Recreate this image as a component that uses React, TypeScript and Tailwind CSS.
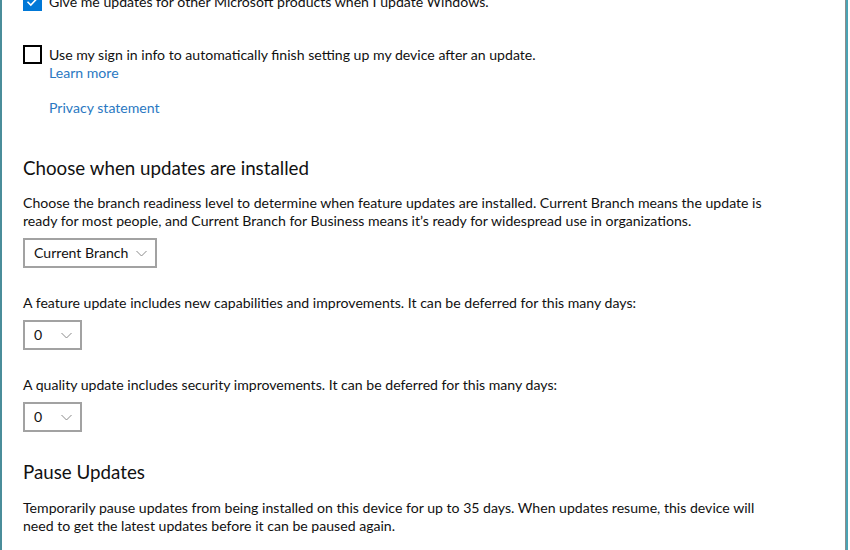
function Checkbox({ checked }: { checked?: boolean }) {
    if (checked) {
        return (
            <span className="flex h-[19px] w-[19px] shrink-0 items-center justify-center bg-[#0078d7]">
                <svg width="13" height="13" viewBox="0 0 13 13" fill="none">
                    <path d="M1.5 6.8 L4.8 10 L11.5 3" stroke="#fff" strokeWidth="1.6" />
                </svg>
            </span>
        );
    }
    return <span className="h-[19px] w-[19px] shrink-0 border-2 border-black bg-white" />;
}

function Chevron() {
    return (
        <svg width="11" height="7" viewBox="0 0 11 7" fill="none">
            <path d="M0.5 1 L5.5 6 L10.5 1" stroke="#8a8a8a" strokeWidth="1" />
        </svg>
    );
}

function Dropdown({ value, width }: { value: string; width: string }) {
    return (
        <div
            className={`flex h-[30px] ${width} items-center justify-between whitespace-nowrap border-2 border-[#a2a2a2] bg-white pl-[9px] pr-[8px] text-[14.1px] text-[#111]`}
        >
            <span>{value}</span>
            <Chevron />
        </div>
    );
}

export default function App() {
    return (
        <div
            className="flex h-[550px] w-[850px] overflow-hidden bg-white text-[14.1px] leading-[18px] text-[#111]"
            style={{ fontFamily: 'Lato, "Noto Sans", sans-serif' }}
        >
            {/* left window edge */}
            <div className="w-[2px] shrink-0 bg-[#4a8d9a]" />

            {/* Settings content */}
            <div className="flex flex-1 flex-col whitespace-nowrap pl-[21px]">
                <div className="-mt-[8px] flex h-[19px] items-center gap-[7px]">
                    <Checkbox checked />
                    <span>Give me updates for other Microsoft products when I update Windows.</span>
                </div>

                <div className="mt-[34px] flex h-[19px] items-center gap-[7px]">
                    <Checkbox />
                    <span>Use my sign in info to automatically finish setting up my device after an update.</span>
                </div>
                <a className="pl-[26px] text-[#2a78c2]">Learn more</a>

                <a className="mt-[17px] pl-[26px] text-[#2a78c2]">Privacy statement</a>

                <h2 className="mt-[37px] text-[18.75px] leading-[28px] text-[#111]">Choose when updates are installed</h2>
                <p className="mt-[12px]">
                    Choose the branch readiness level to determine when feature updates are installed. Current Branch means the update is
                    <br />
                    ready for most people, and Current Branch for Business means it’s ready for widespread use in organizations.
                </p>
                <div className="mt-[8px]">
                    <Dropdown value="Current Branch" width="w-[134px]" />
                </div>

                <p className="mt-[26px]">
                    A feature update includes new capabilities and improvements. It can be deferred for this many days:
                </p>
                <div className="mt-[8px]">
                    <Dropdown value="0" width="w-[59px]" />
                </div>

                <p className="mt-[26px]">
                    A quality update includes security improvements. It can be deferred for this many days:
                </p>
                <div className="mt-[8px]">
                    <Dropdown value="0" width="w-[59px]" />
                </div>

                <h2 className="mt-[26px] text-[18.75px] leading-[28px] text-[#111]">Pause Updates</h2>
                <p className="mt-[13px]">
                    Temporarily pause updates from being installed on this device for up to 35 days. When updates resume, this device will
                    <br />
                    need to get the latest updates before it can be paused again.
                </p>
            </div>

            {/* right window edge */}
            <div className="w-px shrink-0 bg-[#8c8c8c]" />
            <div className="w-[2px] shrink-0 bg-[#4aa3b4]" />
            <div className="w-[2px] shrink-0 bg-white" />
        </div>
    );
}
